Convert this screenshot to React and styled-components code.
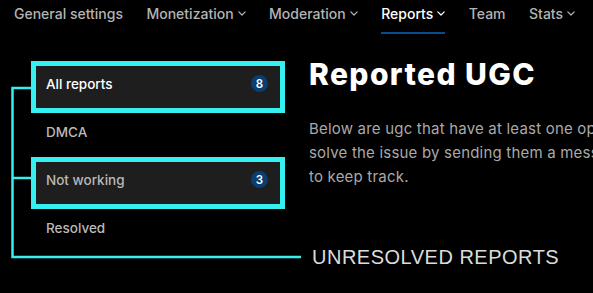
import React from 'react';
import styled, { createGlobalStyle } from 'styled-components';

const GlobalStyle = createGlobalStyle`
  html, body {
    margin: 0;
    padding: 0;
    background: #000;
    overflow: hidden;
  }
  body {
    font-family: Inter, "Noto Sans", sans-serif;
    -webkit-font-smoothing: antialiased;
  }
`;

const navItems = [
  { label: 'General settings' },
  { label: 'Monetization', menu: true },
  { label: 'Moderation', menu: true },
  { label: 'Reports', menu: true, active: true },
  { label: 'Team' },
  { label: 'Stats', menu: true },
];

const reportTabs = [
  { label: 'All reports', count: 8, active: true, marked: true },
  { label: 'DMCA' },
  { label: 'Not working', count: 3, marked: true },
  { label: 'Resolved' },
];

const Chevron = () => (
  <svg width="8" height="5" viewBox="0 0 8 5" fill="none">
    <polyline points="0.8,0.8 4,4 7.2,0.8" stroke="currentColor" strokeWidth="1.2" strokeLinecap="round" strokeLinejoin="round" />
  </svg>
);

const App = () => {
  return (
    <Page>
      <GlobalStyle />
      <TopNav>
        {navItems.map((item) => (
          <NavItem key={item.label} active={item.active}>
            {item.label}
            {item.menu && <Chevron />}
          </NavItem>
        ))}
      </TopNav>
      <Main>
        <Sidebar>
          {reportTabs.map((tab) => (
            <Tab key={tab.label} active={tab.active} marked={tab.marked}>
              {tab.label}
              {tab.count && <Badge>{tab.count}</Badge>}
            </Tab>
          ))}
        </Sidebar>
        <Content>
          <Heading>Reported UGC</Heading>
          <Description>
            Below are ugc that have at least one open report. You can
            <br />
            solve the issue by sending them a message or mark them resolved
            <br />
            to keep track.
          </Description>
        </Content>
      </Main>

      <Annotation width="593" height="293" viewBox="0 0 593 293">
        <path
          d="M31 88 H12.5 V257 H301 M12.5 178 H31"
          fill="none"
          stroke="#36f0f0"
          strokeWidth="2.5"
        />
      </Annotation>
      <AnnotationLabel>UNRESOLVED REPORTS</AnnotationLabel>
    </Page>
  );
};

const Page = styled.div`
  position: relative;
  width: 593px;
  height: 293px;
  background: #000;
  overflow: hidden;
`;

const TopNav = styled.nav`
  display: flex;
  align-items: stretch;
  gap: 23.5px;
  height: 34px;
  padding-left: 14px;
  white-space: nowrap;
`;

const NavItem = styled.div`
  display: flex;
  align-items: center;
  gap: 4px;
  padding-bottom: 6px;
  font-size: 14px;
  font-weight: 500;
  color: ${({ active }) => (active ? '#fff' : '#b4b4b4')};
  border-bottom: 2px solid ${({ active }) => (active ? '#0b4a8c' : 'transparent')};
  box-sizing: border-box;
`;

const Main = styled.div`
  display: flex;
  gap: 29px;
  padding: 32px 0 0 36px;
`;

const Sidebar = styled.div`
  display: flex;
  flex-direction: column;
  gap: 6px;
  width: 244px;
  flex-shrink: 0;
`;

const Tab = styled.div`
  display: flex;
  align-items: center;
  justify-content: space-between;
  height: 42px;
  padding: 0 12px 7px 10px;
  box-sizing: border-box;
  font-size: 13.5px;
  font-weight: 500;
  color: ${({ active }) => (active ? '#fff' : '#b9b9b9')};
  background: ${({ marked }) => (marked ? '#1e1e1e' : 'transparent')};
  outline: ${({ marked }) => (marked ? '5px solid #36f0f0' : 'none')};
`;

const Badge = styled.span`
  display: inline-flex;
  align-items: center;
  justify-content: center;
  width: 17px;
  height: 17px;
  border-radius: 50%;
  background: #0b3d72;
  color: #fff;
  font-size: 11.5px;
  font-weight: 600;
`;

const Content = styled.div`
  display: flex;
  flex-direction: column;
  white-space: nowrap;
`;

const Heading = styled.h1`
  margin: -10px 0 0;
  font-size: 30px;
  font-weight: 800;
  letter-spacing: 1.4px;
  line-height: 36px;
  color: #fff;
`;

const Description = styled.p`
  margin: 25px 0 0;
  font-size: 15px;
  letter-spacing: 0.2px;
  line-height: 24px;
  color: #a9a9a9;
`;

const Annotation = styled.svg`
  position: absolute;
  left: 0;
  top: 0;
  pointer-events: none;
`;

const AnnotationLabel = styled.div`
  position: absolute;
  left: 312px;
  top: 245px;
  font-family: "Liberation Sans", Arial, sans-serif;
  font-size: 20px;
  letter-spacing: 0.5px;
  line-height: 24px;
  color: #dcdcdc;
  white-space: nowrap;
`;

export default App;
